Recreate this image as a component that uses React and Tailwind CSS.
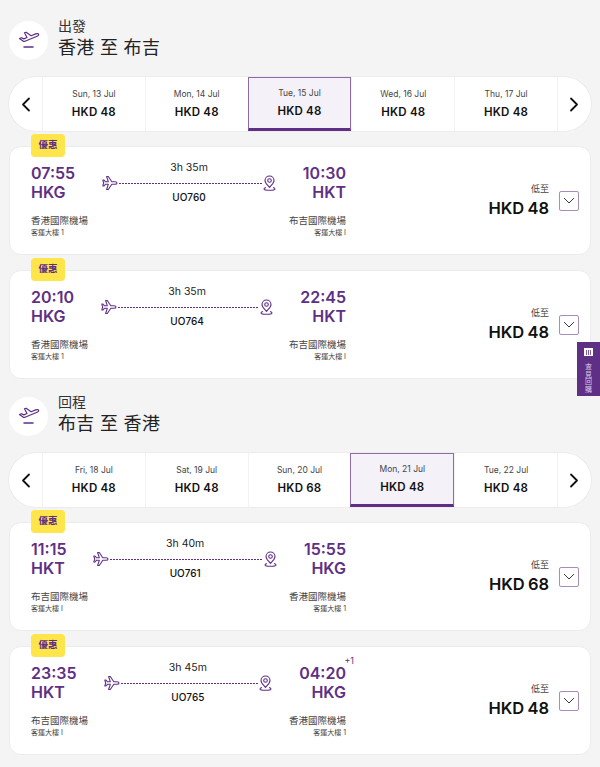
function DepartIcon() {
  return (
    <svg width="22" height="20" viewBox="0 0 22 20" fill="none" stroke="#5f2f86" strokeWidth="1.2" strokeLinejoin="round" strokeLinecap="round">
      <path d="M1.500 8.500l2-.8 2.300 1.200 3.200-1.400L6.500 2.800l1.600-.6 5 3.600 4.600-1.900c1.300-.5 2.600-.3 2.900.4.300.7-.4 1.500-1.600 2L7 11.200c-.8.300-1.500.2-2-.2z" />
      <path d="M6 17h9" strokeWidth="1.500" />
    </svg>
  );
}

function PlaneOutline() {
  return (
    <svg width="16" height="16" viewBox="0 0 16 16" fill="none" stroke="#5f2f86" strokeWidth="1.100" strokeLinejoin="round" className="shrink-0">
      <path d="M15 8c0-.8-.9-1.300-2-1.300H9.800L6.300 1.500H4.600l1.700 5.200H3.400L2 5H.8l.9 3-.9 3H2l1.400-1.700h2.900l-1.700 5.200h1.700l3.500-5.200H13c1.100 0 2-.5 2-1.300z" />
    </svg>
  );
}

function Pin() {
  return (
    <svg width="13" height="16" viewBox="0 0 13 16" fill="none" stroke="#5f2f86" strokeWidth="1.100" className="shrink-0">
      <path d="M6.500 12.500C4.300 9.800 2 8 2 5.500a4.500 4.500 0 0 1 9 0c0 2.500-2.300 4.300-4.500 7z" />
      <circle cx="6.500" cy="5.500" r="1.800" />
      <path d="M3 12.500c-1.300.4-2 1-2 1.500 0 .6 2 1.300 5.500 1.300s5.500-.7 5.500-1.300c0-.5-.7-1.100-2-1.500" />
    </svg>
  );
}

function Chevron({ dir }) {
  return (
    <svg width="10" height="15" viewBox="0 0 10 15" fill="none" stroke="#111" strokeWidth="1.800" strokeLinecap="round" strokeLinejoin="round">
      {dir === "left" ? <path d="M8 1.500L2 7.500l6 6" /> : <path d="M2 1.500l6 6-6 6" />}
    </svg>
  );
}

function Header({ label, route }) {
  return (
    <div className="flex items-center gap-[10px] h-[40px]">
      <div className="w-[39px] h-[39px] rounded-full bg-white flex items-center justify-center shrink-0">
        <DepartIcon />
      </div>
      <div className="flex flex-col">
        <div className="text-[14px] leading-[17px] text-[#333] -mt-[1px]">{label}</div>
        <div className="text-[18px] leading-[28px] text-[#222] tracking-[0.3px]">{route}</div>
      </div>
    </div>
  );
}

function DateBar({ dates, active }) {
  return (
    <div className="flex h-[54px] bg-white rounded-[27px] shadow-[0_0_0_1px_#ececec] overflow-hidden">
      <div className="w-[33px] shrink-0 flex items-center justify-center"><Chevron dir="left" /></div>
      {dates.map(([d, p], i) => (
        <div
          key={d}
          className={
            i === active
              ? "flex-1 flex flex-col items-center justify-center bg-[#f4f1f8] border border-[#8d6aa8] border-b-[3px] border-b-[#5f2f86]"
              : "flex-1 flex flex-col items-center justify-center border-l border-[#f3f3f3]"
          }
        >
          <div className="text-[8.500px] leading-[12px] text-[#444] mb-[5px]">{d}</div>
          <div className="text-[11.500px] leading-[15px] font-semibold text-[#111] tracking-[0.2px]">{p}</div>
        </div>
      ))}
      <div className="w-[34px] shrink-0 flex items-center justify-center border-l border-[#f3f3f3]"><Chevron dir="right" /></div>
    </div>
  );
}

function Times({ time, code, end, plus }) {
  return (
    <div className={end ? "relative flex flex-col items-end shrink-0" : "flex flex-col items-start shrink-0"}>
      {plus && <span className="absolute top-[3px] -right-[8px] text-[9px] leading-[11px] text-[#5f2f86]">+1</span>}
      <div className="text-[16px] leading-[19px] font-semibold text-[#5f2f86] mt-[12px]">{time}</div>
      <div className="text-[16px] leading-[19px] font-semibold text-[#5f2f86]">{code}</div>
    </div>
  );
}

function Airport({ name, terminal, end }) {
  return (
    <div className={end ? "flex flex-col items-end" : "flex flex-col items-start"}>
      <div className="text-[9.500px] leading-[12px] text-[#444] whitespace-nowrap">{name}</div>
      <div className="text-[7px] leading-[10px] text-[#444] mt-[1px] whitespace-nowrap">{terminal}</div>
    </div>
  );
}

function Card({ f }) {
  return (
    <div className="relative h-[109px] bg-white rounded-[12px] border border-[#ececec] flex items-start pl-[21px] pr-[11px]">
      <div className="absolute -top-[13px] left-[21px] w-[34px] h-[23px] rounded-[4px] bg-[#fde54a] flex items-center justify-center text-[9.500px] font-semibold text-[#5f2f86]">優惠</div>
      <div className="w-[315px] flex flex-col pt-[5px] shrink-0">
        <div className="flex gap-[27px]">
          <Times time={f.dep} code={f.from} />
          <div className="flex-1 flex flex-col items-stretch min-w-0">
            <div className="text-center text-[10.500px] leading-[14px] text-[#222] mt-[9px]">{f.dur}</div>
            <div className="flex items-center h-[16px]">
              <PlaneOutline />
              <div className="flex-1 h-px bg-[repeating-linear-gradient(90deg,#5f2f86_0_2px,transparent_2px_3px)] mx-[1px]" />
              <Pin />
            </div>
            <div className="text-center text-[10px] leading-[12px] font-medium text-[#111]">{f.no}</div>
          </div>
          <Times time={f.arr} code={f.to} end plus={f.plus} />
        </div>
        <div className="flex justify-between mt-[12px]">
          <Airport name={f.fromName} terminal={f.fromTerm} />
          <Airport name={f.toName} terminal={f.toTerm} end />
        </div>
      </div>
      <div className="flex-1 flex items-center justify-end h-full gap-[10px]">
        <div className="flex flex-col items-end">
          <div className="text-[9px] leading-[12px] text-[#444]">低至</div>
          <div className="text-[16.500px] leading-[20px] font-semibold text-[#111] mt-[3px] [word-spacing:-1px]">{f.price}</div>
        </div>
        <div className="w-[20px] h-[20px] rounded-[2px] border border-[#a58fb9] flex items-center justify-center">
          <svg width="12" height="7" viewBox="0 0 12 7" fill="none" stroke="#222" strokeWidth="0.9"><path d="M1 1l5 5 5-5" /></svg>
        </div>
      </div>
    </div>
  );
}

const HKG = "香港國際機場", HKT = "布吉國際機場", T1 = "客運大樓 1", TI = "客運大樓 I";
const out = [
  { dep: "07:55", from: "HKG", fromName: HKG, fromTerm: T1, dur: "3h 35m", no: "UO760", arr: "10:30", to: "HKT", toName: HKT, toTerm: TI, price: "HKD 48" },
  { dep: "20:10", from: "HKG", fromName: HKG, fromTerm: T1, dur: "3h 35m", no: "UO764", arr: "22:45", to: "HKT", toName: HKT, toTerm: TI, price: "HKD 48" },
];
const back = [
  { dep: "11:15", from: "HKT", fromName: HKT, fromTerm: TI, dur: "3h 40m", no: "UO761", arr: "15:55", to: "HKG", toName: HKG, toTerm: T1, price: "HKD 68" },
  { dep: "23:35", from: "HKT", fromName: HKT, fromTerm: TI, dur: "3h 45m", no: "UO765", arr: "04:20", to: "HKG", toName: HKG, toTerm: T1, price: "HKD 48", plus: true },
];
const d1 = [["Sun, 13 Jul", "HKD 48"], ["Mon, 14 Jul", "HKD 48"], ["Tue, 15 Jul", "HKD 48"], ["Wed, 16 Jul", "HKD 48"], ["Thu, 17 Jul", "HKD 48"]];
const d2 = [["Fri, 18 Jul", "HKD 48"], ["Sat, 19 Jul", "HKD 48"], ["Sun, 20 Jul", "HKD 68"], ["Mon, 21 Jul", "HKD 48"], ["Tue, 22 Jul", "HKD 48"]];

export default function App() {
  return (
    <div className="relative w-[600px] h-[767px] overflow-hidden bg-[#f4f4f4] px-[9px] pt-[20px] font-['Inter','Noto_Sans_CJK_TC',sans-serif]">
      <Header label="出發" route="香港 至 布吉" />
      <div className="mt-[17px]"><DateBar dates={d1} active={2} /></div>
      <div className="mt-[15px] flex flex-col gap-[15px]">
        {out.map((f) => <Card key={f.no} f={f} />)}
      </div>
      <div className="mt-[17px]"><Header label="回程" route="布吉 至 香港" /></div>
      <div className="mt-[17px]"><DateBar dates={d2} active={3} /></div>
      <div className="mt-[15px] flex flex-col gap-[15px]">
        {back.map((f) => <Card key={f.no} f={f} />)}
      </div>
      <div className="absolute left-[577px] top-[342px] w-[23px] h-[54px] bg-[#5f2f86] flex flex-col items-center pt-[6px]">
        <svg width="9" height="8" viewBox="0 0 9 8" className="shrink-0"><path d="M0 0h9v8H0z" fill="#fff" /><path d="M2.500 2v5M4.500 2v5M6.500 2v5" stroke="#5f2f86" strokeWidth="0.8" /></svg>
        <div className="flex flex-col items-center mt-[7px] text-[7px] leading-[7.500px] text-[#d9c9e6]">
          <span>查</span><span>見</span><span>回</span><span>購</span>
        </div>
      </div>
    </div>
  );
}
